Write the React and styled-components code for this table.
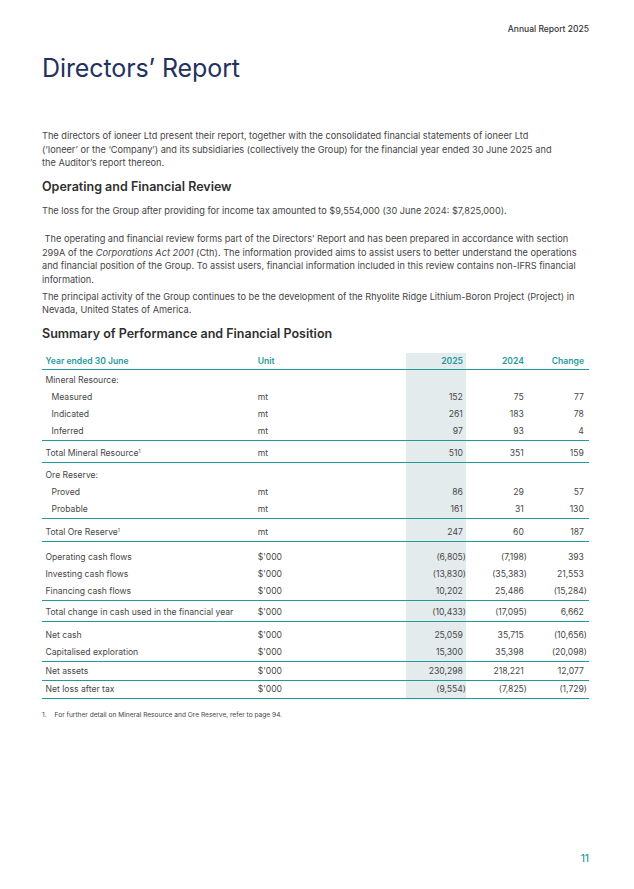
import React from 'react';
import styled, { createGlobalStyle } from 'styled-components';

const TEAL = '#1f9a98';
const SHADE = '#e3ebed';

const GlobalStyle = createGlobalStyle`
  body {
    margin: 0;
    background: #fff;
    font-family: Inter, 'Noto Sans', 'Liberation Sans', sans-serif;
    color: #404040;
  }
`;

const Page = styled.div`
  width: 634px;
  min-height: 889px;
  box-sizing: border-box;
  padding: 23px 45px 25px 42px;
  display: flex;
  flex-direction: column;
`;

const RunningHead = styled.div`
  text-align: right;
  font-size: 8.5px;
  line-height: 12px;
  font-weight: 500;
  color: #333;
`;

const Title = styled.h1`
  margin: 18px 0 0;
  font-size: 25px;
  line-height: 30px;
  font-weight: 400;
  color: #243160;
  letter-spacing: -0.1px;
`;

const Para = styled.p`
  margin: ${p => p.$mt || 0}px 0 0;
  font-size: 9.2px;
  line-height: 13.5px;
  color: #454545;
  white-space: nowrap;
  em {
    font-style: italic;
  }
`;

const Heading = styled.h2`
  margin: 8px 0 0;
  font-size: 12.5px;
  line-height: 18px;
  font-weight: 600;
  color: #2f2f2f;
`;

const Table = styled.div`
  margin-top: 10px;
  font-size: 8.6px;
  color: #474747;
  background: linear-gradient(
    to right,
    transparent 364px,
    ${SHADE} 364px,
    ${SHADE} 424px,
    transparent 424px
  );
`;

const cols = '215.7px 148.3px 60px 61px 1fr';

const HeadRow = styled.div`
  display: grid;
  grid-template-columns: ${cols};
  height: 16px;
  align-items: center;
  border-bottom: 1px solid ${TEAL};
  color: ${TEAL};
  font-weight: 600;
`;

const HeadCell = styled.div`
  padding-left: ${p => (p.$num || p.$flush ? 0 : 3.5)}px;
  padding-right: ${p => (p.$num ? (p.$last ? 5 : 3) : 0)}px;
  text-align: ${p => (p.$num ? 'right' : 'left')};
`;

const Group = styled.div`
  padding-top: ${p => p.$pt}px;
  border-bottom: 1px solid ${TEAL};
`;

const Row = styled.div`
  display: grid;
  grid-template-columns: ${cols};
  height: 17px;
  align-items: center;
  white-space: nowrap;
`;

const Label = styled.div`
  padding-left: ${p => (p.$indent ? 9.5 : 3.5)}px;
  sup {
    font-size: 5px;
    vertical-align: 3px;
  }
`;

const Unit = styled.div``;

const Num = styled.div`
  text-align: right;
  padding-right: ${p => (p.$last ? 2 : 0)}px;
`;

const Ghost = styled.span`
  visibility: hidden;
`;

const Footnote = styled.div`
  margin-top: 11px;
  display: flex;
  gap: 8px;
  font-size: 6.6px;
  line-height: 10px;
  color: #444;
`;

const PageNum = styled.div`
  margin-top: auto;
  text-align: right;
  font-size: 10px;
  font-weight: 500;
  color: ${TEAL};
`;

const groups = [
  {
    pt: 2,
    rows: [
      { label: 'Mineral Resource:' },
      { label: 'Measured', indent: true, unit: 'mt', v: ['152', '75', '77'] },
      { label: 'Indicated', indent: true, unit: 'mt', v: ['261', '183', '78'] },
      { label: 'Inferred', indent: true, unit: 'mt', v: ['97', '93', '4'] },
    ],
  },
  { pt: 4, rows: [{ label: 'Total Mineral Resource', sup: true, unit: 'mt', v: ['510', '351', '159'] }] },
  {
    pt: 4,
    rows: [
      { label: 'Ore Reserve:' },
      { label: 'Proved', indent: true, unit: 'mt', v: ['86', '29', '57'] },
      { label: 'Probable', indent: true, unit: 'mt', v: ['161', '31', '130'] },
    ],
  },
  { pt: 5, rows: [{ label: 'Total Ore Reserve', sup: true, unit: 'mt', v: ['247', '60', '187'] }] },
  {
    pt: 7,
    rows: [
      { label: 'Operating cash flows', unit: "$'000", v: ['(6,805)', '(7,198)', '393'] },
      { label: 'Investing cash flows', unit: "$'000", v: ['(13,830)', '(35,383)', '21,553'] },
      { label: 'Financing cash flows', unit: "$'000", v: ['10,202', '25,486', '(15,284)'] },
    ],
  },
  {
    pt: 3,
    rows: [
      { label: 'Total change in cash used in the financial year', unit: "$'000", v: ['(10,433)', '(17,095)', '6,662'] },
    ],
  },
  {
    pt: 5,
    rows: [
      { label: 'Net cash', unit: "$'000", v: ['25,059', '35,715', '(10,656)'] },
      { label: 'Capitalised exploration', unit: "$'000", v: ['15,300', '35,398', '(20,098)'] },
    ],
  },
  { pt: 1, rows: [{ label: 'Net assets', unit: "$'000", v: ['230,298', '218,221', '12,077'] }] },
  { pt: 0, rows: [{ label: 'Net loss after tax', unit: "$'000", v: ['(9,554)', '(7,825)', '(1,729)'] }] },
];

const Value = ({ v, last }) => (
  <Num $last={last}>
    {v}
    {!v.startsWith('(') && <Ghost>)</Ghost>}
  </Num>
);

export default function App() {
  return (
    <Page>
      <GlobalStyle />
      <RunningHead>Annual Report 2025</RunningHead>
      <Title>Directors’ Report</Title>

      <Para $mt={46}>
        The directors of ioneer Ltd present their report, together with the consolidated financial statements of ioneer Ltd
        <br />
        (‘Ioneer’ or the ‘Company’) and its subsidiaries (collectively the Group) for the financial year ended 30 June 2025 and
        <br />
        the Auditor’s report thereon.
      </Para>

      <Heading>Operating and Financial Review</Heading>
      <Para $mt={8}>The loss for the Group after providing for income tax amounted to $9,554,000 (30 June 2024: $7,825,000).</Para>
      <Para $mt={15}>
        &nbsp;The operating and financial review forms part of the Directors’ Report and has been prepared in accordance with section
        <br />
        299A of the <em>Corporations Act 2001</em> (Cth). The information provided aims to assist users to better understand the operations
        <br />
        and financial position of the Group. To assist users, financial information included in this review contains non-IFRS financial
        <br />
        information.
      </Para>
      <Para $mt={3.5}>
        The principal activity of the Group continues to be the development of the Rhyolite Ridge Lithium-Boron Project (Project) in
        <br />
        Nevada, United States of America.
      </Para>

      <Heading>Summary of Performance and Financial Position</Heading>

      <Table>
        <HeadRow>
          <HeadCell>Year ended 30 June</HeadCell>
          <HeadCell $flush>Unit</HeadCell>
          <HeadCell $num>2025</HeadCell>
          <HeadCell $num>2024</HeadCell>
          <HeadCell $num $last>Change</HeadCell>
        </HeadRow>
        {groups.map((g, i) => (
          <Group key={i} $pt={g.pt}>
            {g.rows.map((r, j) => (
              <Row key={j}>
                <Label $indent={r.indent}>
                  {r.label}
                  {r.sup && <sup>1</sup>}
                </Label>
                <Unit>{r.unit}</Unit>
                {r.v ? (
                  <>
                    <Value v={r.v[0]} />
                    <Value v={r.v[1]} />
                    <Value v={r.v[2]} last />
                  </>
                ) : (
                  <>
                    <div />
                    <div />
                    <div />
                  </>
                )}
              </Row>
            ))}
          </Group>
        ))}
      </Table>

      <Footnote>
        <span>1.</span>
        <span>For further detail on Mineral Resource and Ore Reserve, refer to page 94.</span>
      </Footnote>

      <PageNum>11</PageNum>
    </Page>
  );
}
